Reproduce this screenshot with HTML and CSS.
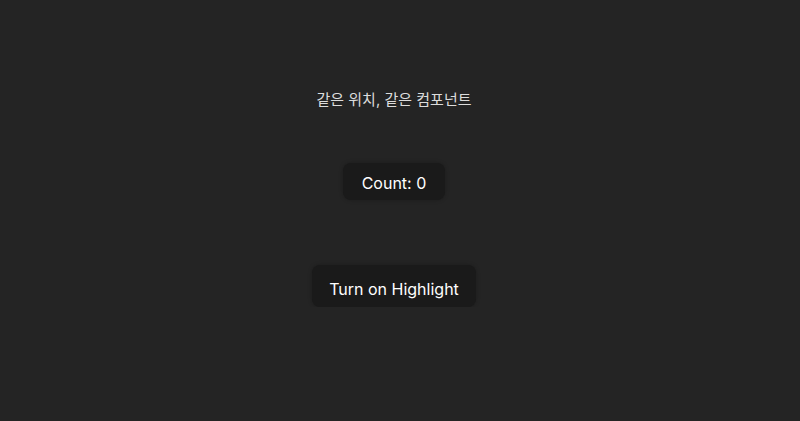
FILE: index.html
```html
<!DOCTYPE html>
<html lang="ko">
<head>
<meta charset="utf-8">
<link rel="stylesheet" href="styles.css">
</head>
<body>
<main class="app">
  <p class="title">같은 위치, 같은 컴포넌트</p>
  <div class="counter">Count: 0</div>
  <button class="btn">Turn on Highlight</button>
</main>
</body>
</html>
```
FILE: styles.css
```css
html, body {
  margin: 0;
  padding: 0;
  background: #242424;
}
body {
  font-family: Inter, "Noto Sans CJK KR", sans-serif;
  font-size: 16px;
  line-height: 24px;
  color: rgba(255, 255, 255, 0.87);
}
.app {
  display: flex;
  flex-direction: column;
  align-items: center;
  padding: 89px 12px 0 0;
}
.title {
  margin: 0;
  font-size: 15px;
  line-height: 22px;
  color: #dcdcdc;
}
.counter {
  margin-top: 52px;
  background: #1a1a1a;
  border-radius: 8px;
  padding: 8px 19px 5px;
  color: #fff;
  box-shadow: 0 0 4px rgba(0, 0, 0, 0.25);
}
.btn {
  margin-top: 65px;
  font: inherit;
  line-height: 24px;
  color: #fff;
  background: #1a1a1a;
  border: none;
  border-radius: 8px;
  padding: 12px 17px 6px;
  box-shadow: 0 0 4px rgba(0, 0, 0, 0.25);
  cursor: pointer;
}
```
